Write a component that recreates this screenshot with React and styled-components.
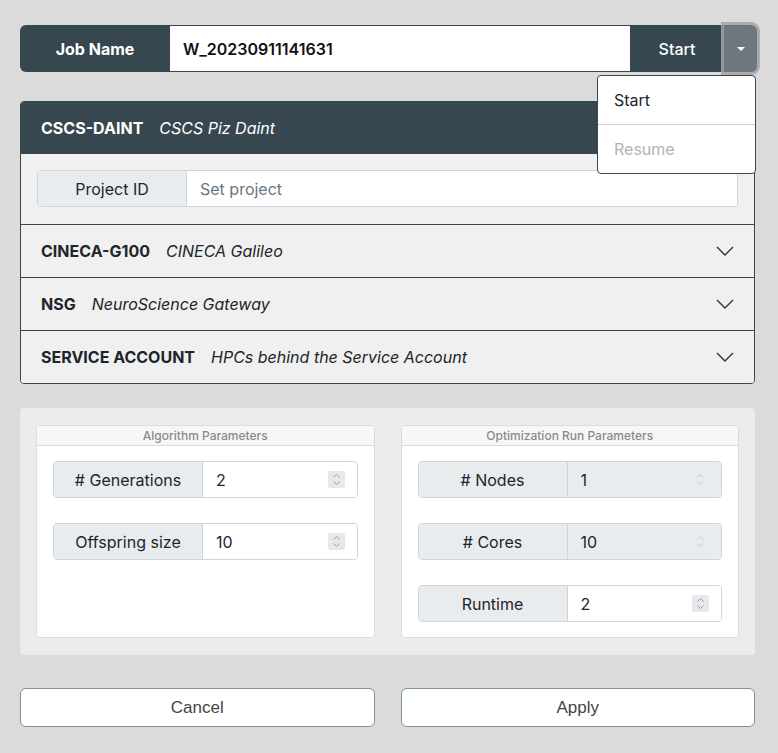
import React from 'react';
import styled, { createGlobalStyle } from 'styled-components';

const Global = createGlobalStyle`
  html, body { margin: 0; padding: 0; }
  body {
    background: #dadbda;
    font-family: Inter, 'Noto Sans', 'Liberation Sans', sans-serif;
    color: #212529;
  }
`;

const Page = styled.div`
  position: relative;
  width: 778px;
  height: 753px;
  box-sizing: border-box;
  padding: 25px 23px 0 20px;
  display: flex;
  flex-direction: column;
  overflow: hidden;
`;

const JobBar = styled.div`
  position: relative;
  display: flex;
  height: 47px;
  margin-right: -2px;
  border-radius: 6px;
  background: #37474f;
`;

const JobLabel = styled.div`
  width: 150px;
  display: flex;
  align-items: center;
  justify-content: center;
  color: #fff;
  font-weight: 700;
  font-size: 16px;
`;

const JobInput = styled.div`
  flex: 1;
  background: #fff;
  display: flex;
  align-items: center;
  padding-left: 13px;
  font-weight: 600;
  font-size: 16px;
  color: #111;
  border-top: 1px solid #37474f;
  border-bottom: 1px solid #37474f;
`;

const StartBtn = styled.div`
  width: 94px;
  display: flex;
  align-items: center;
  justify-content: center;
  color: #fff;
  font-weight: 500;
  font-size: 16px;
`;

const Toggle = styled.div`
  width: 33px;
  background: #6e767e;
  border-radius: 0 6px 6px 0;
  box-shadow: 0 0 0 3px rgba(160, 165, 170, 0.85);
  display: flex;
  align-items: center;
  justify-content: center;
  &::after {
    content: '';
    border-left: 4px solid transparent;
    border-right: 4px solid transparent;
    border-top: 4px solid #fff;
  }
`;

const Menu = styled.div`
  position: absolute;
  top: 50px;
  right: 1px;
  width: 157px;
  background: #fff;
  border: 1px solid #37474f;
  border-radius: 4px;
  z-index: 5;
`;

const MenuItem = styled.div`
  height: 48px;
  display: flex;
  align-items: center;
  padding-left: 16px;
  font-size: 16px;
  color: ${p => (p.disabled ? '#aeb4ba' : '#212529')};
  & + & { border-top: 1px solid #cfd1d3; }
`;

const Accordion = styled.div`
  margin-top: 29px;
  border: 1px solid #37474f;
  border-radius: 4px;
  background: #f0f0f0;
  overflow: hidden;
`;

const Header = styled.div`
  height: 52px;
  display: flex;
  align-items: center;
  padding: 0 20px;
  gap: 16px;
  background: ${p => (p.open ? '#37474f' : '#f0f0f0')};
  color: ${p => (p.open ? '#fff' : '#212529')};
  border-top: ${p => (p.first ? 'none' : '1px solid #37474f')};
  font-size: 16px;
`;

const Code = styled.span`
  font-weight: 700;
`;

const Desc = styled.span`
  font-style: italic;
  flex: 1;
`;

const Chevron = () => (
  <svg width="18" height="10" viewBox="0 0 18 10" fill="none">
    <path d="M1 1l8 8 8-8" stroke="#333" strokeWidth="1.4" />
  </svg>
);

const Body = styled.div`
  padding: 16px 16px 17px;
`;

const Group = styled.div`
  display: flex;
  height: 37px;
  box-sizing: border-box;
  border: 1px solid #ced4da;
  border-radius: 4px;
  overflow: hidden;
  font-size: 16px;
`;

const GroupLabel = styled.div`
  width: ${p => p.w || 148}px;
  flex: none;
  background: #e9ecef;
  border-right: 1px solid #ced4da;
  display: flex;
  align-items: center;
  justify-content: center;
  color: #212529;
`;

const GroupInput = styled.div`
  flex: 1;
  display: flex;
  align-items: center;
  padding: 0 12px 0 13px;
  background: ${p => (p.disabled ? '#e9ecef' : '#fff')};
  color: ${p => (p.placeholder ? '#6c757d' : '#212529')};
`;

const Value = styled.span`
  flex: 1;
`;

const Spin = styled.span`
  width: 17px;
  height: 17px;
  display: flex;
  align-items: center;
  justify-content: center;
  background: ${p => (p.disabled ? 'transparent' : '#e8e8ec')};
  border-radius: 2px;
`;

const Spinner = ({ disabled }) => (
  <Spin disabled={disabled}>
    <svg width="9" height="13" viewBox="0 0 9 13" fill="none">
      <path d="M1.5 4.5L4.5 1.5 7.5 4.5M1.5 8.5L4.5 11.5 7.5 8.5" stroke={disabled ? '#c4c6ca' : '#9a9ca2'} strokeWidth="1" />
    </svg>
  </Spin>
);

const Params = styled.div`
  margin-top: 24px;
  background: #ececec;
  border-radius: 4px;
  padding: 17px 16px;
  display: grid;
  grid-template-columns: 1fr 1fr;
  gap: 26px;
`;

const Card = styled.div`
  height: 213px;
  box-sizing: border-box;
  background: #fff;
  border: 1px solid #dcdcdc;
  border-radius: 4px;
  overflow: hidden;
`;

const CardHead = styled.div`
  height: 19px;
  background: #f7f7f7;
  border-bottom: 1px solid #dcdcdc;
  display: flex;
  align-items: center;
  justify-content: center;
  font-size: 12px;
  font-weight: 500;
  color: #8a8a8a;
`;

const CardBody = styled.div`
  padding: 15px 16px 0;
  display: flex;
  flex-direction: column;
  gap: 25px;
`;

const Footer = styled.div`
  margin-top: 33px;
  display: grid;
  grid-template-columns: 1fr 1fr;
  gap: 26px;
`;

const Button = styled.button`
  height: 39px;
  background: #fff;
  border: 1px solid #7d929e;
  border-radius: 6px;
  font-family: 'Liberation Sans Narrow', 'Liberation Sans', sans-serif;
  font-size: 17px;
  color: #444;
  cursor: pointer;
`;

const Field = ({ label, value, disabled }) => (
  <Group>
    <GroupLabel>{label}</GroupLabel>
    <GroupInput disabled={disabled}>
      <Value>{value}</Value>
      <Spinner disabled={disabled} />
    </GroupInput>
  </Group>
);

const hpcs = [
  ['CINECA-G100', 'CINECA Galileo'],
  ['NSG', 'NeuroScience Gateway'],
  ['SERVICE ACCOUNT', 'HPCs behind the Service Account'],
];

export default function App() {
  return (
    <Page>
      <Global />
      <JobBar>
        <JobLabel>Job Name</JobLabel>
        <JobInput>W_20230911141631</JobInput>
        <StartBtn>Start</StartBtn>
        <Toggle />
        <Menu>
          <MenuItem>Start</MenuItem>
          <MenuItem disabled>Resume</MenuItem>
        </Menu>
      </JobBar>

      <Accordion>
        <Header open first>
          <Code>CSCS-DAINT</Code>
          <Desc>CSCS Piz Daint</Desc>
        </Header>
        <Body>
          <Group>
            <GroupLabel>Project ID</GroupLabel>
            <GroupInput placeholder>Set project</GroupInput>
          </Group>
        </Body>
        {hpcs.map(([code, desc]) => (
          <Header key={code}>
            <Code>{code}</Code>
            <Desc>{desc}</Desc>
            <Chevron />
          </Header>
        ))}
      </Accordion>

      <Params>
        <Card>
          <CardHead>Algorithm Parameters</CardHead>
          <CardBody>
            <Field label="# Generations" value="2" />
            <Field label="Offspring size" value="10" />
          </CardBody>
        </Card>
        <Card>
          <CardHead>Optimization Run Parameters</CardHead>
          <CardBody>
            <Field label="# Nodes" value="1" disabled />
            <Field label="# Cores" value="10" disabled />
            <Field label="Runtime" value="2" />
          </CardBody>
        </Card>
      </Params>

      <Footer>
        <Button>Cancel</Button>
        <Button>Apply</Button>
      </Footer>
    </Page>
  );
}
